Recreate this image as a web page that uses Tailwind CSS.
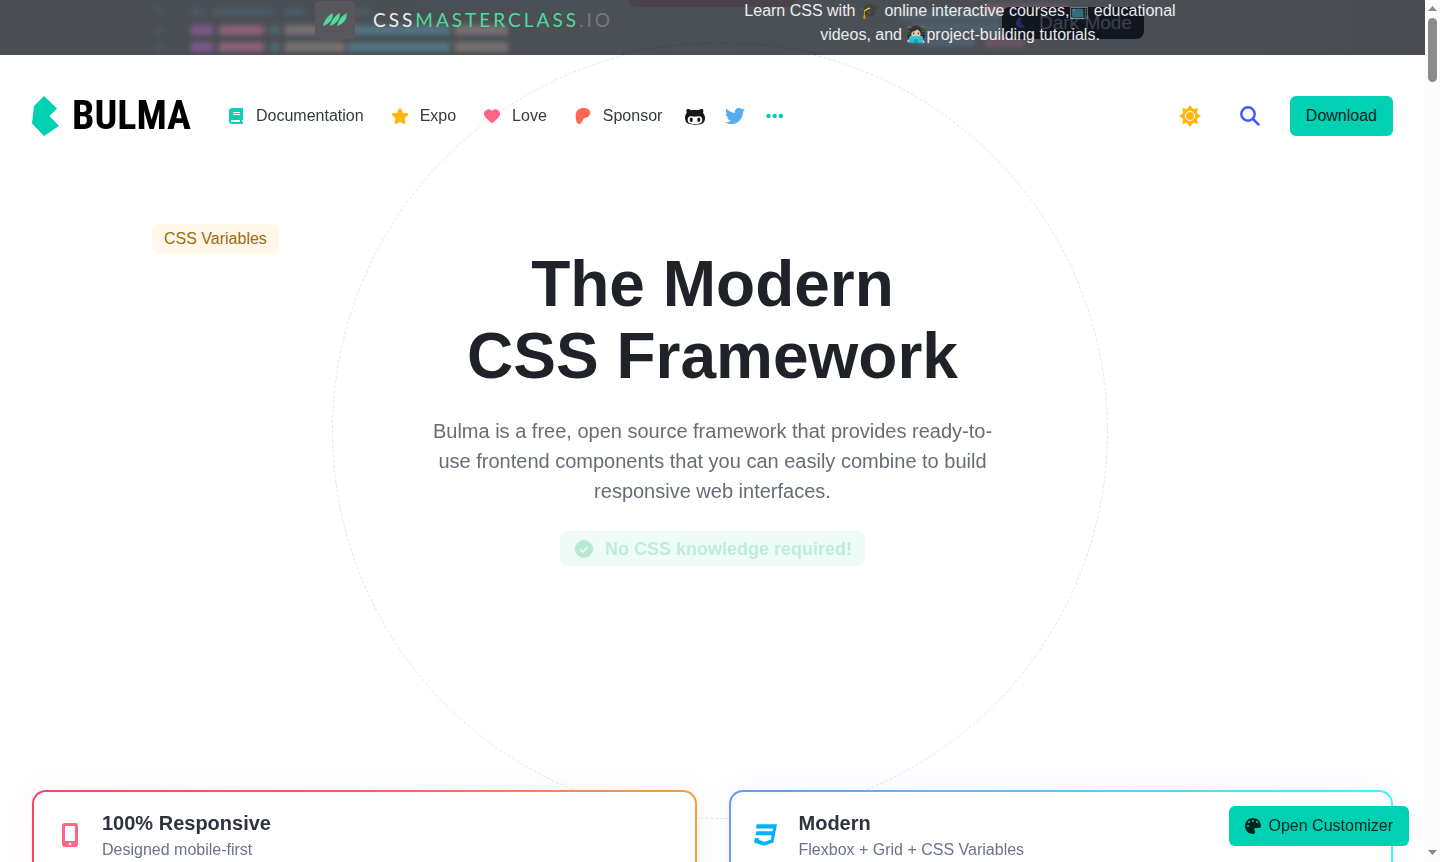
<!DOCTYPE html>
<html lang="en">
<head>
<meta charset="utf-8">
<title>Bulma: the modern CSS framework</title>
<script src="https://cdn.jsdelivr.net/npm/@tailwindcss/browser@4"></script>
</head>
<body class="flex h-screen overflow-hidden bg-white font-['Liberation_Sans',Arial,sans-serif] text-base text-[#333843]">

<div class="relative h-screen min-w-0 flex-1 overflow-hidden">
  <!-- Dashed orbit, centred on the window -->
  <div class="pointer-events-none fixed inset-0 flex items-center justify-center">
    <svg class="size-[776px] shrink-0" viewBox="0 0 776 776" fill="none"><circle cx="388" cy="388" r="387.5" stroke="#e2e3e6" stroke-dasharray="3 2"/></svg>
  </div>

  <!-- Sponsor banner -->
  <header class="relative h-[55px] overflow-hidden bg-[#4a4d52]">
    <div class="absolute inset-0 flex justify-center bg-linear-to-r from-[#4a4e53] via-[#4a5055] to-[#4a4c51]">
      <svg class="h-[55px] w-full" viewBox="0 0 1425 55" preserveAspectRatio="xMidYMid slice">
        <defs><filter id="soft" x="-20%" y="-50%" width="140%" height="200%"><feGaussianBlur stdDeviation="2.5"/></filter></defs>
        <g filter="url(#soft)">
          <g stroke-width="7" stroke-dasharray="7 2" opacity=".8">
            <path d="M192 12H204M213 12H273M284 12H306M345 12H370" stroke="#4c6170"/>
            <path d="M155 10H163M155 31H163M155 47H163" stroke="#4a5866"/>
          </g>
          <path d="M195 30H209M195 47H209" stroke="#79598b" stroke-width="10" stroke-linecap="round"/>
          <path d="M223 30H260M223 47H260" stroke="#8a6077" stroke-width="10" stroke-linecap="round"/>
          <path d="M270 30H280M270 47H280" stroke="#4b6670" stroke-width="9"/>
          <path d="M285 30H346M285 47H345M455 30H508M455 47H508" stroke="#776f70" stroke-width="10"/>
          <path d="M348 30H450M348 47H450" stroke="#537280" stroke-width="10"/>
          <path d="M900 15H1000M912 27H1000M915 42H975" stroke="#505e6c" stroke-width="9"/>
          <path d="M985 43H1025M985 8H1070" stroke="#6c5763" stroke-width="8"/>
        </g>
        <path d="M627 -10H799Q799 7 789 7H637Q627 7 627 -10Z" fill="#4b434a"/>
        <path d="M616 55Q668 43 720 43T824 55" fill="none" stroke="#42464b" stroke-dasharray="3 2"/>
      </svg>
    </div>
    <div class="absolute top-[7px] left-[1002px] flex h-8 w-[142px] items-center gap-3 rounded-lg bg-[#12161f] pl-[13px] text-[19px] text-[#3f4249]">
      <svg class="size-3" viewBox="0 0 16 16" fill="#29265c"><path d="M9 1A7 7 0 1 0 14 12 7 7 0 0 1 9 1Z"/></svg>
      <span>Dark Mode</span>
    </div>
    <div class="relative flex h-full justify-center pl-[100px] text-white/90">
      <a href="#" class="flex h-10 w-[300px] shrink-0 items-center gap-[18px]">
        <svg class="size-10 shrink-0" viewBox="0 0 40 40"><rect y="1" width="40" height="38" rx="4" fill="#57575c"/><g fill="#4fdb9a"><path d="M8 26C9 21 13 15 18 13Q18 23 8 26ZM15 26C16 21 20 15 25 13Q25 23 15 26ZM22 26C23 21 27 15 32 13Q32 23 22 26Z"/></g></svg>
        <span class="font-[Lato] text-[19px] tracking-[3px] whitespace-nowrap">CSS<span class="text-[#4fdb9a]">MASTERCLASS</span><span class="text-[#77777b]">.IO</span></span>
      </a>
      <p class="-mt-px ml-[95px] w-[500px] shrink-0 text-center leading-6">Learn CSS with 🎓 online interactive courses,📺 educational<br>videos, and 👩🏻‍💻project-building tutorials.</p>
    </div>
  </header>

  <!-- Navigation -->
  <nav class="relative flex items-center px-8 pt-[39px]">
    <a href="#" class="flex h-11 items-center" aria-label="Bulma">
      <svg class="h-10 w-[27px]" viewBox="0 0 27 40" fill="#00d1b2"><path d="M12 0L2 10 0 27.500 12 40 27 30 17.500 20 25 12.500Z"/></svg>
      <span class="ml-[13px] w-[121px] font-['Roboto_Condensed','Noto_Sans_CJK_JP',sans-serif] text-[40px] leading-[44px] font-bold text-black">BULMA</span>
    </a>
    <div class="ml-9 flex flex-1 items-center">
      <a href="#" class="flex items-center gap-3"><svg class="mr-px h-4 w-3.5" viewBox="0 0 448 512" fill="#00d1b2"><path d="M96 0C43 0 0 43 0 96V416c0 53 43 96 96 96H416c18 0 32-14 32-32s-14-32-32-32V384c18 0 32-14 32-32V32c0-18-14-32-32-32H96zm0 384H352v64H96c-18 0-32-14-32-32s14-32 32-32zm32-240c0-9 7-16 16-16H336a16 16 0 0 1 0 32H144c-9 0-16-7-16-16zm16 48H336a16 16 0 0 1 0 32H144a16 16 0 0 1 0-32z"/></svg>Documentation</a>
      <a href="#" class="ml-[27px] flex items-center gap-[11px]"><svg class="h-4 w-[18px]" viewBox="0 0 576 512" fill="#ffb70f"><path d="M316.900 18C311.600 7 300.400 0 288.100 0s-23.400 7-28.800 18L195 150.300 51.400 171.500c-12 1.800-22 10.200-25.700 21.700s-.7 24.200 7.900 32.700L137.800 329 113.200 474.700c-2 12 3 24.200 12.900 31.300s23 8 33.800 2.300l128.300-68.500 128.300 68.500c10.800 5.700 23.900 4.900 33.800-2.300s14.900-19.300 12.900-31.300L438.500 329 542.700 225.900c8.600-8.500 11.700-21.200 7.900-32.700s-13.700-19.900-25.700-21.700L381.200 150.300 316.900 18z"/></svg>Expo</a>
      <a href="#" class="ml-7 flex items-center gap-3"><svg class="size-4" viewBox="0 0 512 512" fill="#ff6685"><path d="M47.600 300.400L228.300 469.100c7.500 7 17.400 10.900 27.700 10.900s20.200-3.900 27.700-10.900L464.400 300.400c30.400-28.300 47.600-68 47.600-109.500v-5.800c0-69.900-50.500-129.500-119.400-141C347 36.500 300.600 51.400 268 84L256 96 244 84c-32.600-32.600-79-47.500-124.600-39.900C50.500 55.600 0 115.200 0 185.100v5.800c0 41.500 17.200 81.200 47.600 109.500z"/></svg>Love</a>
      <a href="#" class="ml-7 flex items-center gap-3"><svg class="size-4" viewBox="0 0 512 512" fill="#ff6655"><path d="M490 154C490 88 439 34 379 15c-75-24-173-21-244 13C49 68 22 157 21 246c-1 73 6 265 115 266 80 1 92-102 130-152 26-35 61-46 103-56 72-18 121-75 121-150z"/></svg>Sponsor</a>
      <a href="#" aria-label="GitHub" class="ml-[23px]"><svg class="h-5 w-5" viewBox="0 0 480 480" fill="#14161a"><path fill-rule="evenodd" d="M186 329c0 21-11 55-37 55s-36-34-36-55 11-54 36-54 37 33 37 54zM480 279c0 31-3 66-17 95-37 75-139 73-215 73-77 0-187 3-226-73-15-29-22-64-22-95 0-42 14-81 41-112-5-16-7-32-7-48 0-21 5-31 14-50 44 0 72 9 106 35 28-7 58-10 87-10 27 0 54 3 79 9 34-26 62-34 105-34 10 19 15 29 15 50 0 16-3 32-8 47 27 32 48 71 48 113zm-65 50c0-44-27-83-74-83-19 0-37 3-56 6-15 2-30 3-45 3s-30-1-46-3c-18-3-36-6-56-6-46 0-73 39-73 83 0 88 80 101 150 101h49c70 0 151-13 151-101zm-83-54c-26 0-37 33-37 54s11 55 37 55 37-34 37-55-11-54-37-54z"/></svg></a>
      <a href="#" aria-label="Twitter" class="ml-5"><svg class="size-5" viewBox="0 0 512 512" fill="#55acee"><path d="M459.400 151.700c.3 4.500.3 9.100.3 13.600 0 138.700-105.600 298.600-298.600 298.600-59.500 0-114.700-17.200-161.100-47.100 8.400 1 16.600 1.300 25.300 1.300 49.100 0 94.200-16.600 130.300-44.800-46.100-1-84.800-31.200-98.100-72.800 6.500 1 13 1.600 19.800 1.600 9.400 0 18.800-1.300 27.600-3.600-48.100-9.700-84.100-52-84.100-103v-1.300c14 7.800 30.200 12.700 47.400 13.300-28.300-18.800-46.800-51-46.800-87.400 0-19.500 5.200-37.400 14.300-53 51.700 63.700 129.300 105.300 216.400 109.800-1.600-7.800-2.600-15.900-2.600-24 0-57.800 46.800-104.900 104.900-104.900 30.200 0 57.500 12.700 76.700 33.100 23.700-4.500 46.500-13.300 66.600-25.300-7.800 24.400-24.400 44.800-46.100 57.800 21.100-2.300 41.600-8.100 60.400-16.200-14.300 20.800-32.200 39.300-52.600 54.300z"/></svg></a>
      <button type="button" aria-label="More" class="ml-5"><svg class="size-5" viewBox="0 0 20 20" fill="#00d1b2"><circle cx="3.500" cy="10" r="2.200"/><circle cx="9.700" cy="10" r="2.200"/><circle cx="15.900" cy="10" r="2.200"/></svg></button>
    </div>
    <div class="flex items-center">
      <button type="button" aria-label="Theme"><svg class="size-[22px]" viewBox="0 0 22 22"><path d="M11 0L13.800 4 18.800 3.200 18 8.200 22 11 18 13.800 18.800 18.800 13.800 18 11 22 8.200 18 3.200 18.800 4 13.800 0 11 4 8.200 3.200 3.200 8.200 4Z" fill="#ffb70f"/><circle cx="11" cy="11" r="4.500" fill="#ffb70f" stroke="#fff" stroke-width="1.200"/></svg></button>
      <button type="button" aria-label="Search" class="ml-[39px]"><svg class="size-5" viewBox="0 0 20 20" fill="none" stroke="#4258ff" stroke-width="2.500"><circle cx="8" cy="8" r="6.700"/><path d="M13 13L19.200 19.200"/></svg></button>
      <a href="#" class="ml-[30px] flex h-10 items-center rounded-md bg-[#00d1b2] px-4 text-[#00241f]">Download</a>
    </div>
  </nav>

  <!-- Hero -->
  <main class="relative">
    <span class="absolute top-[86px] left-[152px] flex h-[30px] items-center rounded-lg bg-[#fff8e9] px-3 text-[#9a6c0c]">CSS Variables</span>
    <section class="flex h-[652px] flex-col items-center pt-[110px] text-center">
      <h1 class="text-[64px] leading-[72px] font-bold text-[#1f2229]">The Modern<br>CSS Framework</h1>
      <p class="mt-6 w-[576px] text-xl leading-[30px] text-[#686c78]">Bulma is a free, open source framework that provides ready-to-use frontend components that you can easily combine to build responsive web interfaces.</p>
      <p class="mt-[25px] flex h-[35px] items-center gap-3 rounded-lg bg-[#effbf7] pr-[13px] pl-[15px] text-lg font-bold text-[#bdecd8]"><svg class="size-[18px]" viewBox="0 0 18 18"><circle cx="9" cy="9" r="9" fill="#b6e9d4"/><path d="M5.300 9.300L8 12 12.700 6.700" fill="none" stroke="#effbf7" stroke-width="1.700"/></svg>No CSS knowledge required!</p>
    </section>

    <div class="grid grid-cols-2 gap-8 px-8">
      <section class="rounded-[14px] bg-linear-to-r from-[#f14668] via-[#ff5c5c] to-[#f5a040] p-0.5 shadow-[0_0_24px_#ff668518]">
        <div class="flex h-[220px] items-start rounded-xl bg-white pt-[17px] pl-7">
          <svg class="mt-3.5 h-6 w-4" viewBox="0 0 16 24"><rect width="16" height="24" rx="3" fill="#ff6685"/><path d="M3 3H13V18H3Z" fill="#fff"/><circle cx="8" cy="21" r="1.300" fill="#fff"/></svg>
          <div class="ml-6"><h2 class="text-xl leading-7 font-bold text-[#2e333d]">100% Responsive</h2><p class="mt-px leading-6 text-[#69748c]">Designed mobile-first</p></div>
        </div>
      </section>
      <section class="rounded-[14px] bg-linear-to-r from-[#6699ff] to-[#3ff5ff] p-0.5 shadow-[0_0_24px_#6699ff18]">
        <div class="flex h-[220px] items-start rounded-xl bg-white pt-[17px] pl-[23px]">
          <svg class="mt-[15px] h-[22px] w-[23px]" viewBox="0 0 480 448" fill="#00b1ff"><path d="M57 0H480L405 380 209 448 0 380 18 288H103L97 322 216 366 350 322 368 230H32L49 145H386L397 86H40Z"/></svg>
          <div class="ml-[22px]"><h2 class="text-xl leading-7 font-bold text-[#2e333d]">Modern</h2><p class="mt-px leading-6 text-[#69748c]">Flexbox + Grid + CSS Variables</p></div>
        </div>
      </section>
    </div>
  </main>

  <button type="button" class="absolute right-4 bottom-4 flex h-10 items-center gap-2 rounded-md bg-[#00d1b2] px-4 text-[#00241f]"><svg class="size-4" viewBox="0 0 512 512" fill="#00241f" fill-rule="evenodd"><path d="M512 256v3c-.4 36-34 61-70 61H344c-27 0-48 21-48 48 0 25 26 44 26 72 0 45-33 72-66 72C115 512 0 397 0 256S115 0 256 0s256 115 256 256zM128 256a32 32 0 1 0-64 0 32 32 0 0 0 64 0zm0-96a32 32 0 1 0 0-64 32 32 0 0 0 0 64zM288 96a32 32 0 1 0-64 0 32 32 0 0 0 64 0zm96 64a32 32 0 1 0 0-64 32 32 0 0 0 0 64z"/></svg>Open Customizer</button>
</div>

<!-- Scroll bar -->
<aside class="relative flex h-screen w-[15px] shrink-0 flex-col items-center bg-[#fcfcfc]" aria-hidden="true">
  <svg class="mt-1.5 h-[5px] w-[9px]" viewBox="0 0 9 5" fill="#8b8b8b"><path d="M0 5L4.500 0 9 5Z"/></svg>
  <div class="mt-[7px] h-16 w-[9px] rounded-full bg-[#8b8b8b]"></div>
  <svg class="mt-auto mb-[7px] h-[5px] w-[9px]" viewBox="0 0 9 5" fill="#8b8b8b"><path d="M0 0H9L4.500 5Z"/></svg>
</aside>
</body>
</html>
